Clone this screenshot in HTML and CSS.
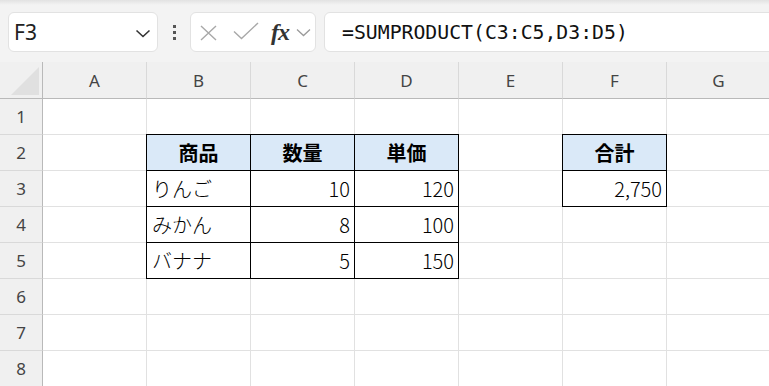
FILE: index.html
```html
<!DOCTYPE html>
<html lang="ja">
<head>
  <meta charset="utf-8">
  <title>SUMPRODUCT</title>
  <link rel="stylesheet" href="styles.css">
</head>
<body>
  <div class="toolbar">
    <div class="namebox">
      <span class="ref">F3</span>
      <svg class="chev" width="16" height="9" viewBox="0 0 16 9"><path d="M1.5 1.5 L8 7.5 L14.5 1.5" fill="none" stroke="#333" stroke-width="1.6"/></svg>
    </div>
    <div class="dots"><i></i><i></i><i></i></div>
    <div class="fnbox">
      <svg class="icon-x" width="20" height="16" viewBox="0 0 20 16"><path d="M2 1 L17 15 M17 1 L2 15" stroke="#a8a8a8" stroke-width="1.4" fill="none"/></svg>
      <svg class="icon-ok" width="26" height="18" viewBox="0 0 26 18"><path d="M1 9.5 L8.5 16.5 L25 1" stroke="#a8a8a8" stroke-width="1.4" fill="none"/></svg>
      <span class="fx">fx</span>
      <svg class="chev-sm" width="15" height="9" viewBox="0 0 15 9"><path d="M1 1.5 L7.5 7.5 L14 1.5" fill="none" stroke="#9a9a9a" stroke-width="1.3"/></svg>
    </div>
    <div class="formula">=SUMPRODUCT(C3:C5,D3:D5)</div>
  </div>

  <div class="sheet">
    <div class="c corner"><svg width="28" height="28" viewBox="0 0 28 28"><path d="M28 0 L28 28 L0 28 Z" fill="#e0e0e0"/></svg></div>
    <div class="c colh">A</div>
    <div class="c colh">B</div>
    <div class="c colh">C</div>
    <div class="c colh">D</div>
    <div class="c colh">E</div>
    <div class="c colh">F</div>
    <div class="c colh">G</div>

    <div class="c rowh">1</div>
    <div class="c"></div><div class="c"></div><div class="c"></div><div class="c"></div><div class="c"></div><div class="c"></div><div class="c"></div>

    <div class="c rowh">2</div>
    <div class="c"></div>
    <div class="c t th">商品</div>
    <div class="c t th">数量</div>
    <div class="c t th">単価</div>
    <div class="c"></div>
    <div class="c t th">合計</div>
    <div class="c"></div>

    <div class="c rowh">3</div>
    <div class="c"></div>
    <div class="c t">りんご</div>
    <div class="c t num">10</div>
    <div class="c t num">120</div>
    <div class="c"></div>
    <div class="c t num">2,750</div>
    <div class="c"></div>

    <div class="c rowh">4</div>
    <div class="c"></div>
    <div class="c t">みかん</div>
    <div class="c t num">8</div>
    <div class="c t num">100</div>
    <div class="c"></div><div class="c"></div><div class="c"></div>

    <div class="c rowh">5</div>
    <div class="c"></div>
    <div class="c t">バナナ</div>
    <div class="c t num">5</div>
    <div class="c t num">150</div>
    <div class="c"></div><div class="c"></div><div class="c"></div>

    <div class="c rowh">6</div>
    <div class="c"></div><div class="c"></div><div class="c"></div><div class="c"></div><div class="c"></div><div class="c"></div><div class="c"></div>

    <div class="c rowh">7</div>
    <div class="c"></div><div class="c"></div><div class="c"></div><div class="c"></div><div class="c"></div><div class="c"></div><div class="c"></div>

    <div class="c rowh">8</div>
    <div class="c"></div><div class="c"></div><div class="c"></div><div class="c"></div><div class="c"></div><div class="c"></div><div class="c"></div>
  </div>
</body>
</html>
```

FILE: styles.css
```css
body { margin: 0; overflow: hidden; background: #fff; font-family: "Noto Sans", sans-serif; }

/* formula bar */
.toolbar { height: 62px; box-sizing: border-box; padding-top: 12px; display: flex; align-items: flex-start;
  background: linear-gradient(#e2e2e2 0, #f3f3f3 5px, #f3f3f3 100%); }
.namebox { margin-left: 8px; width: 150px; height: 40px; box-sizing: border-box; border: 1px solid #e2e2e2; border-radius: 6px;
  background: #fff; display: flex; align-items: center; justify-content: space-between; padding: 0 6px 0 5px; }
.ref { font-size: 21px; color: #222; }
.chev { margin-top: 2px; }
.dots { width: 32px; height: 40px; display: flex; flex-direction: column; align-items: center; justify-content: center; gap: 3px; }
.dots i { display: block; width: 3px; height: 3px; background: #555; }
.fnbox { width: 126px; height: 40px; box-sizing: border-box; border: 1px solid #e2e2e2; border-radius: 6px; background: #fff;
  display: flex; align-items: center; padding-left: 8px; }
.icon-x { margin-top: 1px; }
.icon-ok { margin-left: 14px; margin-top: -2px; }
.fx { margin-left: 12px; font: italic bold 24px "Liberation Serif", serif; color: #333; line-height: 1; letter-spacing: -1px; }
.chev-sm { margin-left: 7px; }
.formula { margin-left: 8px; margin-right: -12px; flex: 1; height: 40px; box-sizing: border-box; border: 1px solid #e2e2e2;
  border-radius: 6px; background: #fff; display: flex; align-items: center; padding-left: 17px;
  font: 19.8px "DejaVu Sans Mono", monospace; color: #111; }

/* grid */
.sheet { display: grid; grid-template-columns: 43px repeat(7, 104px); grid-template-rows: 37px repeat(8, 36px); }
.c { box-sizing: border-box; border-right: 1px solid #e1e1e1; border-bottom: 1px solid #e1e1e1; display: flex; align-items: center;
  padding: 0 4px; font: 300 20px "Noto Sans CJK JP", sans-serif; line-height: 1; color: #000; white-space: nowrap; }
.corner { background: #f0f0f0; border-right-color: #b9b9b9; border-bottom-color: #b9b9b9; justify-content: flex-end; align-items: flex-end; padding: 0 3px 3px 0; }
.colh { background: #f0f0f0; border-right-color: #d9d9d9; border-bottom-color: #b9b9b9; justify-content: center;
  font: 17px "Noto Sans", sans-serif; color: #444; }
.rowh { background: #f0f0f0; border-right-color: #b9b9b9; border-bottom-color: #d9d9d9; justify-content: center;
  font: 17px "Noto Sans", sans-serif; color: #444; padding: 0; }
.t { border-right-color: #000; border-bottom-color: #000; box-shadow: -1px 0 0 #000, 0 -1px 0 #000, -1px -1px 0 #000; padding-left: 5px; }
.th { background: #dae9f8; font-weight: bold; justify-content: center; padding: 0; }
.num { justify-content: flex-end; padding-right: 4px; }
```
